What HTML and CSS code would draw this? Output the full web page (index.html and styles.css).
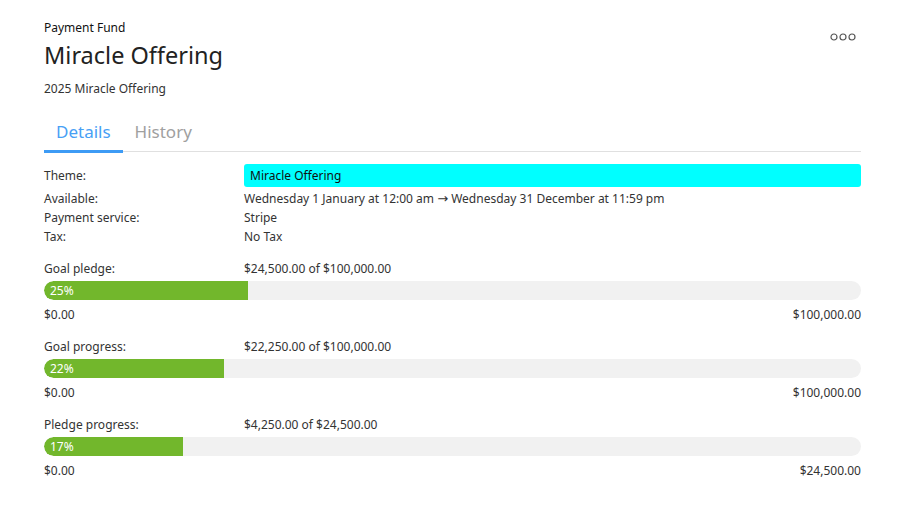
FILE: index.html
```html
<!DOCTYPE html>
<html lang="en">
  <head>
    <meta charset="utf-8" />
    <title>Miracle Offering</title>
    <link rel="stylesheet" href="styles.css">
  </head>
  <body>
    <div class="fund">
      <header class="fund-header">
        <div>
          <div class="fund-kind">Payment Fund</div>
          <h1 class="fund-title">Miracle Offering</h1>
          <div class="fund-desc">2025 Miracle Offering</div>
        </div>
        <button class="more-btn" title="More">
          <svg width="26" height="8" viewBox="0 0 26 8">
            <circle cx="4" cy="4" r="3" fill="none" stroke="#555" stroke-width="1.2" />
            <circle cx="13" cy="4" r="3" fill="none" stroke="#555" stroke-width="1.2" />
            <circle cx="22" cy="4" r="3" fill="none" stroke="#555" stroke-width="1.2" />
          </svg>
        </button>
      </header>

      <nav class="tabs">
        <a class="tab active">Details</a>
        <a class="tab">History</a>
      </nav>

      <dl class="props">
        <dt>Theme:</dt>
        <dd><span class="theme-chip">Miracle Offering</span></dd>
        <dt>Available:</dt>
        <dd>Wednesday 1 January at 12:00 am <span class="arrow">→</span> Wednesday 31 December at 11:59 pm</dd>
        <dt>Payment service:</dt>
        <dd>Stripe</dd>
        <dt>Tax:</dt>
        <dd>No Tax</dd>
      </dl>

      <section class="goal">
        <div class="goal-head"><span>Goal pledge:</span><span>$24,500.00 of $100,000.00</span></div>
        <div class="bar"><div class="bar-fill" style="width: 25%">25%</div></div>
        <div class="goal-range"><span>$0.00</span><span>$100,000.00</span></div>
      </section>

      <section class="goal">
        <div class="goal-head"><span>Goal progress:</span><span>$22,250.00 of $100,000.00</span></div>
        <div class="bar"><div class="bar-fill" style="width: 22%">22%</div></div>
        <div class="goal-range"><span>$0.00</span><span>$100,000.00</span></div>
      </section>

      <section class="goal">
        <div class="goal-head"><span>Pledge progress:</span><span>$4,250.00 of $24,500.00</span></div>
        <div class="bar"><div class="bar-fill" style="width: 17%">17%</div></div>
        <div class="goal-range"><span>$0.00</span><span>$24,500.00</span></div>
      </section>
    </div>
  </body>
</html>
```

FILE: styles.css
```css
body {
  margin: 0;
  background: #ffffff;
  color: #222222;
  font-family: "Noto Sans", "Open Sans", sans-serif;
  font-size: 12px;
}

.fund {
  padding: 19px 43px 0 44px;
}

.fund-header {
  display: flex;
  justify-content: space-between;
  align-items: flex-start;
}

.fund-kind {
  line-height: 18px;
  color: #111111;
}

.fund-title {
  margin: 0;
  font-size: 23.5px;
  font-weight: 400;
  line-height: 36px;
  color: #222222;
}

.fund-desc {
  margin-top: 7px;
  line-height: 18px;
  color: #333333;
}

.more-btn {
  margin-top: 10px;
  margin-right: 5px;
  padding: 0;
  border: none;
  background: none;
  cursor: pointer;
}

.tabs {
  display: flex;
  margin-top: 21px;
  border-bottom: 1px solid #e0e0e0;
}

.tab {
  padding: 0 12px 5px;
  font-size: 17px;
  line-height: 26px;
  color: #a0a0a0;
  cursor: pointer;
}

.tab.active {
  color: #47a0f5;
  border-bottom: 3px solid #3d9bf5;
  margin-bottom: -2px;
}

.props {
  display: grid;
  grid-template-columns: 200px 1fr;
  margin: 12px 0 0;
  line-height: 19px;
}

.props dt,
.props dd {
  margin: 0;
  color: #333333;
}

.props dt:first-child {
  padding-top: 2px;
}

.arrow {
  font-family: "DejaVu Sans", sans-serif;
  font-size: 13px;
}

.theme-chip {
  display: block;
  height: 23px;
  margin-bottom: 2px;
  line-height: 24px;
  padding: 0 6px;
  border-radius: 3px;
  background: #00ffff;
  color: #111111;
}

.goal {
  margin-top: 14px;
}

.goal-head {
  display: grid;
  grid-template-columns: 200px 1fr;
  line-height: 18px;
  color: #333333;
}

.bar {
  display: flex;
  height: 19px;
  margin-top: 3px;
  border-radius: 10px;
  background: #f1f1f1;
  overflow: hidden;
}

.bar-fill {
  padding-left: 6px;
  box-sizing: border-box;
  border-radius: 10px 0 0 10px;
  background: #72b72c;
  color: #ffffff;
  line-height: 20px;
}

.goal-range {
  display: flex;
  justify-content: space-between;
  margin-top: 6px;
  line-height: 18px;
  color: #333333;
}
```
